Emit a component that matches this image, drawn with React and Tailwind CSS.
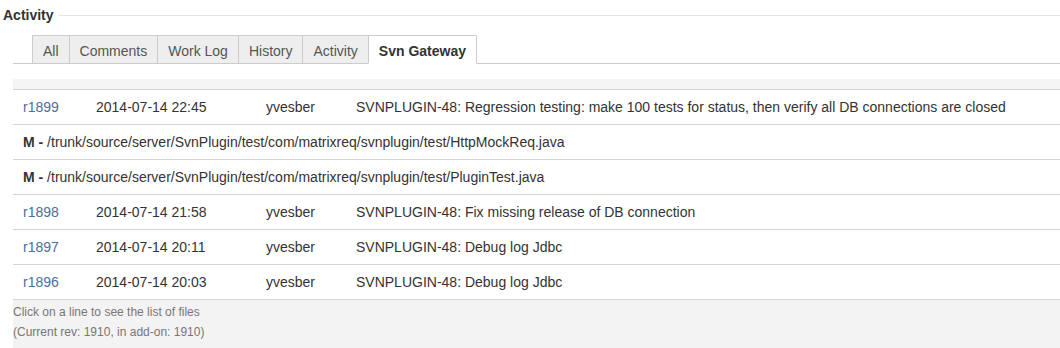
const tabs = ["All", "Comments", "Work Log", "History", "Activity", "Svn Gateway"];

const rows = [
  { type: "rev", rev: "r1899", date: "2014-07-14 22:45", user: "yvesber", msg: "SVNPLUGIN-48: Regression testing: make 100 tests for status, then verify all DB connections are closed" },
  { type: "file", path: "/trunk/source/server/SvnPlugin/test/com/matrixreq/svnplugin/test/HttpMockReq.java" },
  { type: "file", path: "/trunk/source/server/SvnPlugin/test/com/matrixreq/svnplugin/test/PluginTest.java" },
  { type: "rev", rev: "r1898", date: "2014-07-14 21:58", user: "yvesber", msg: "SVNPLUGIN-48: Fix missing release of DB connection" },
  { type: "rev", rev: "r1897", date: "2014-07-14 20:11", user: "yvesber", msg: "SVNPLUGIN-48: Debug log Jdbc" },
  { type: "rev", rev: "r1896", date: "2014-07-14 20:03", user: "yvesber", msg: "SVNPLUGIN-48: Debug log Jdbc" },
];

const App = () => {
  return (
    <div className="w-[1060px] h-[348px] overflow-hidden bg-white text-[#333] font-['Liberation_Sans',Arial,sans-serif]">
      <div className="flex items-center pt-[7px] pl-[3px]">
        <h2 className="text-[14px] leading-[16px] font-bold">Activity</h2>
        <div className="flex-1 ml-[5px] h-px bg-[#e5e5e5]" />
      </div>

      <div className="ml-[13px] mt-[12px]">
        <div className="flex border-b border-[#ccc] pl-[19px] h-[29px]">
          {tabs.map((t) => {
            const active = t === "Svn Gateway";
            return (
              <div
                key={t}
                className={
                  active
                    ? "px-[10px] pt-[2px] h-[29px] -mb-px border border-[#ccc] border-b-white bg-white font-bold text-[#333] text-[14px] leading-[26px]"
                    : "px-[10px] pt-[2px] h-[28px] border-t border-l border-[#ccc] last:border-r bg-[#eee] text-[#555] text-[14px] leading-[26px]"
                }
              >
                {t}
              </div>
            );
          })}
        </div>

        <div className="mt-[15px] h-[10px] bg-[#f5f5f5] border-b border-[#d4d4d4] box-content" />

        {rows.map((r, i) => (
          <div key={i} className="flex items-center h-[35px] border-b border-[#d4d4d4] text-[14px] pl-[10px]">
            {r.type === "rev" ? (
              <>
                <span className="w-[73px] text-[#4a6fa0]">{r.rev}</span>
                <span className="w-[170px]">{r.date}</span>
                <span className="w-[90px]">{r.user}</span>
                <span>{r.msg}</span>
              </>
            ) : (
              <span>
                <b>M - </b>
                {r.path}
              </span>
            )}
          </div>
        ))}

        <div className="bg-[#f3f3f3] h-[60px] pt-[2px] text-[12px] leading-[20px] text-[#777]">
          <div>Click on a line to see the list of files</div>
          <div>(Current rev: 1910, in add-on: 1910)</div>
        </div>
      </div>
    </div>
  );
};

export default App;
